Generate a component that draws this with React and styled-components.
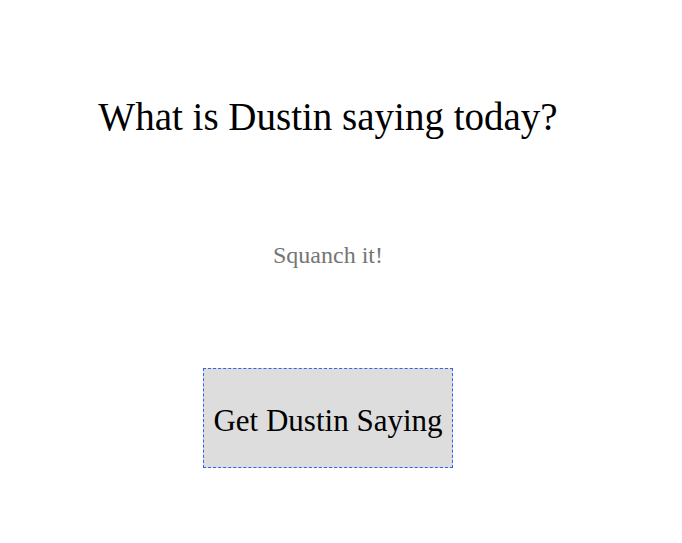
import React from "react";
import styled, { createGlobalStyle } from "styled-components";

const Global = createGlobalStyle`
  body {
    margin: 8px;
    background: #fff;
    font-family: "Liberation Serif", serif;
  }
`;

const Page = styled.main`
  width: 640px;
  display: flex;
  flex-direction: column;
  align-items: center;
  padding-top: 85px;
`;

const Title = styled.h1`
  margin: 0;
  font-size: 39px;
  line-height: 48px;
  font-weight: 400;
  color: #000;
`;

const Saying = styled.p`
  margin: 100px 0 0;
  font-size: 24px;
  line-height: 28px;
  color: #757575;
`;

const Button = styled.button`
  margin-top: 99px;
  width: 250px;
  height: 100px;
  background: #dddddd;
  border: 1px dashed #2f62f5;
  font-family: "Liberation Serif", serif;
  font-size: 31px;
  color: #000;
  padding: 6px 0 0;
  cursor: pointer;
`;

export default function App() {
  return (
    <>
      <Global />
      <Page>
        <Title>What is Dustin saying today?</Title>
        <Saying>Squanch it!</Saying>
        <Button>Get Dustin Saying</Button>
      </Page>
    </>
  );
}
